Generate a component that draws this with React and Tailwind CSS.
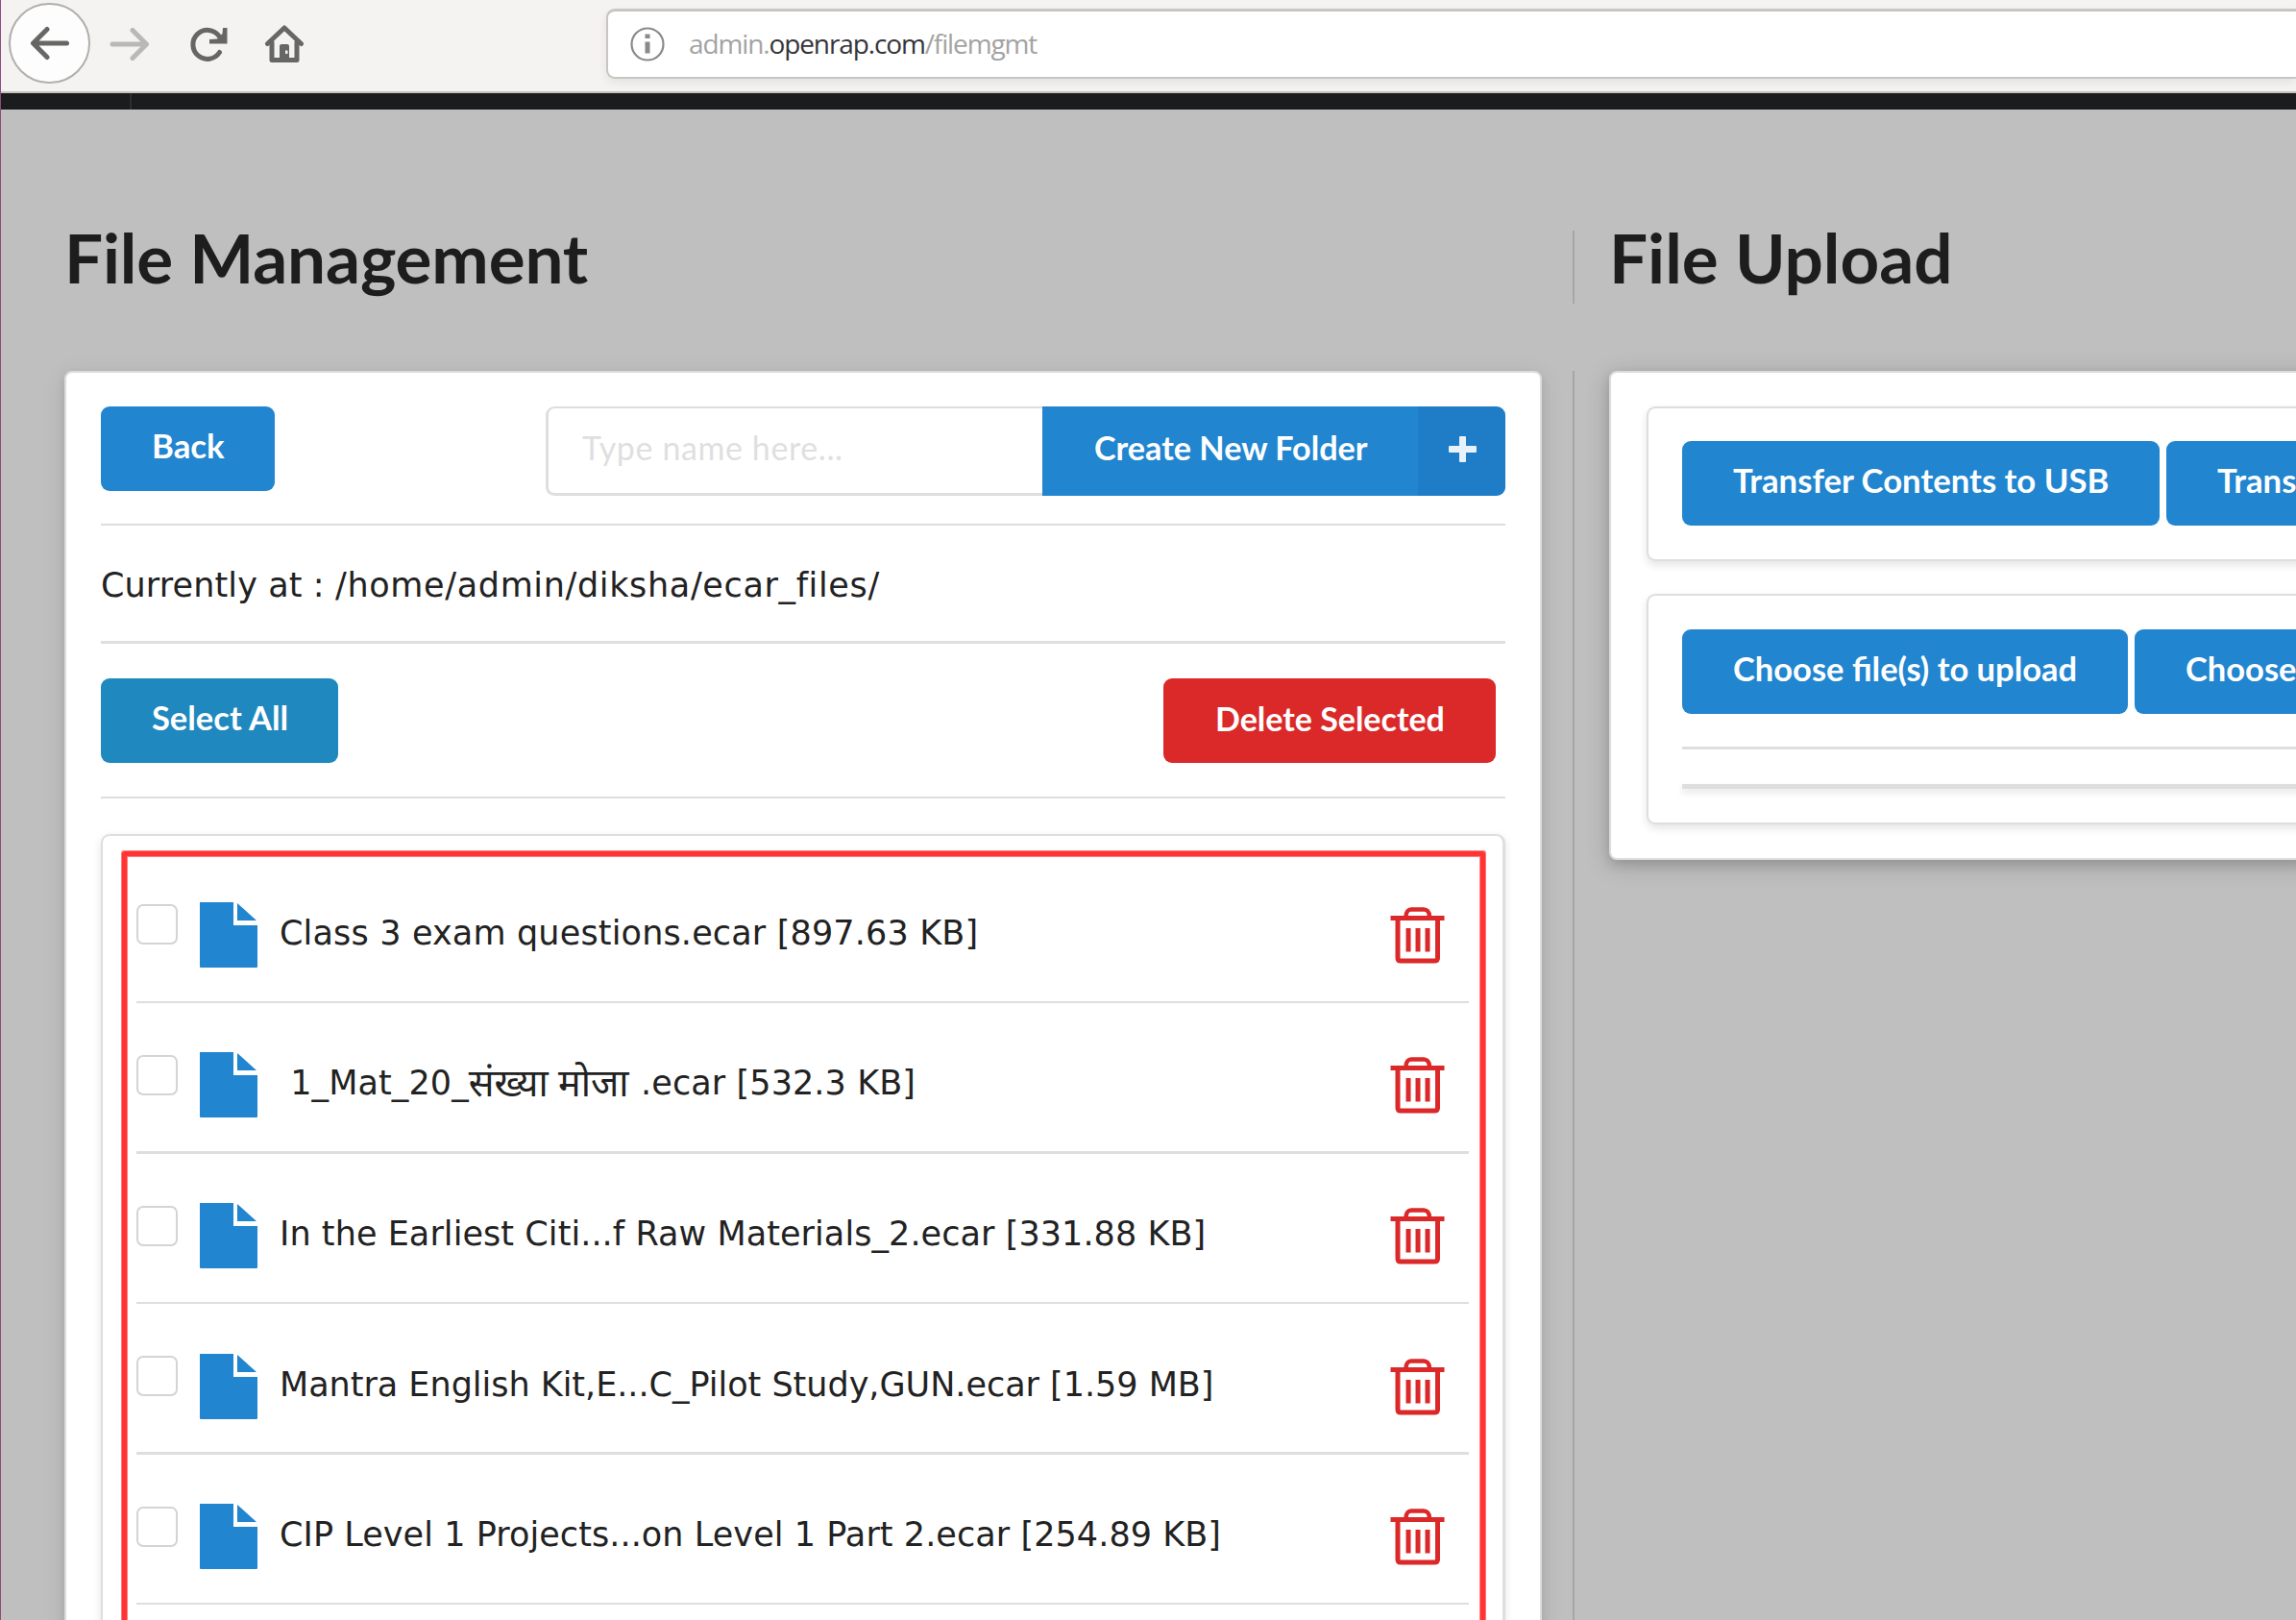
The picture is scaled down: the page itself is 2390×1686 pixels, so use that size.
const lato = "font-['Lato',sans-serif]";
const dejavu = "font-['DejaVu_Sans',sans-serif] text-[#222222]";

const files = [
  {
    name: "Class 3 exam questions.ecar [897.63 KB]",
    row: "h-[157px] border-b-2",
    offset: "mt-[52px]",
    spacing: "tracking-[0.16px]",
  },
  {
    name: (
      <>
        &nbsp;1_Mat_20_
        <span className="inline-block w-[168px] translate-y-[2px] font-['Noto_Sans',sans-serif] text-[39.500px] leading-none tracking-normal">
          संख्या मोजा
        </span>
        {" "}.ecar [532.3 KB]
      </>
    ),
    row: "h-[157px] border-b-3",
    offset: "mt-[51px]",
    spacing: "tracking-[0.1px]",
  },
  {
    name: "In the Earliest Citi...f Raw Materials_2.ecar [331.88 KB]",
    row: "h-[156px] border-b-2",
    offset: "mt-[51px]",
    spacing: "tracking-[0.07px]",
  },
  {
    name: "Mantra English Kit,E...C_Pilot Study,GUN.ecar [1.59 MB]",
    row: "h-[157px] border-b-3",
    offset: "mt-[52px]",
    spacing: "tracking-[-0.02px]",
  },
  {
    name: "CIP Level 1 Projects...on Level 1 Part 2.ecar [254.89 KB]",
    row: "h-[156px] border-b-2",
    offset: "mt-[51px]",
    spacing: "tracking-[0.07px]",
  },
];

function FileIcon() {
  return (
    <svg width="62" height="69" viewBox="0 0 62 69" fill="#2185d0" className="block">
      <path d="M1 0H36V24H61V67Q61 68 60 68H2Q1 68 1 67Z" />
      <path d="M40 1L60 19H40Z" />
    </svg>
  );
}

function TrashIcon() {
  return (
    <svg width="57" height="59" viewBox="0 0 57 59" fill="none" stroke="#db2828" strokeWidth="5" className="block">
      <path d="M0.5 11.5H56.5" />
      <path d="M16.5 10C16.500 5 19 2.500 22 2.500H35C38 2.500 41 5 41 10" strokeWidth="4.500" />
      <path d="M8 12V53Q8 56 11 56H46Q49.500 56 49.500 53V12" />
      <path d="M19 22V46.500M29 22V46.500M39 22V46.500" />
    </svg>
  );
}

function Button({ children, className }) {
  return (
    <button
      className={`${lato} flex h-[88px] shrink-0 items-center justify-start whitespace-nowrap rounded-[9px] pb-[6px] pl-[53px] font-bold text-white ${className}`}
    >
      {children}
    </button>
  );
}

function BrowserBar() {
  return (
    <header className="flex h-[97px] shrink-0 items-start border-b-2 border-[#c6c2be] bg-[#f4f3f1]">
      <div className="ml-2 mt-[3px] flex h-[84px] w-[85px] items-center justify-center rounded-full border-2 border-[#b0afad] bg-[#fdfdfd]">
        <svg width="42" height="36" viewBox="0 0 42 36" fill="none" stroke="#666664" strokeWidth="5" strokeLinecap="round" strokeLinejoin="round">
          <path d="M38.500 18H4M18 3.500L3.500 18L18 32.500" />
        </svg>
      </div>
      <svg className="ml-[20px] mt-[28px]" width="42" height="36" viewBox="0 0 42 36" fill="none" stroke="#b9b8b6" strokeWidth="5" strokeLinecap="round" strokeLinejoin="round">
        <path d="M3 18H38M24 3.500L38.500 18L24 32.500" />
      </svg>
      <svg className="ml-[41px] mt-[28px]" width="40" height="37" viewBox="0 0 40 37" fill="none" stroke="#666664" strokeWidth="5">
        <path d="M31.500 26.500A15 15 0 1 1 31 9.500" strokeLinecap="round" />
        <path d="M35 1L39.500 1V17.500H21V13L29 12.500L34.500 7Z" fill="#666664" stroke="none" />
      </svg>
      <svg className="ml-[38px] mt-[25px]" width="42" height="41" viewBox="0 0 42 41" fill="none" stroke="#666664" strokeWidth="5" strokeLinejoin="round" strokeLinecap="round">
        <path d="M3.500 20.500L21 4L38.500 20.500" />
        <path d="M8 19V37.500H34V19" />
        <path d="M16 38V23Q16 21 18 21H24Q26 21 26 23V38Z" fill="#666664" stroke="none" />
        <rect x="22" y="27.500" width="2.500" height="3.500" fill="#f4f3f1" stroke="none" />
      </svg>
      <div className="ml-[314px] mt-[9px] flex h-[73px] flex-1 items-center rounded-l-[9px] border-b-2 border-l-2 border-t-3 border-[#c8c5c2] bg-white shadow-[0_4px_10px_rgba(0,0,0,0.07)]">
        <svg className="ml-[23px]" width="36" height="36" viewBox="0 0 36 36" fill="none">
          <circle cx="18" cy="18" r="16.500" stroke="#8a8a8a" strokeWidth="2.200" />
          <path d="M15.500 15.500H20.500V27.500H15.500ZM15.500 7.500H20.500V12H15.500Z" fill="#8a8a8a" />
        </svg>
        <span className="-mt-[3px] ml-[25px] whitespace-nowrap font-['Open_Sans',sans-serif] text-[28px] leading-10 tracking-[-1.12px] text-[#a3a3a3]">
          admin.<span className="text-[#35353a]">openrap.com</span>/filemgmt
        </span>
      </div>
    </header>
  );
}

function FileManagement() {
  return (
    <section className="h-[1400px] w-[1538px] shrink-0 rounded-[8px] border-2 border-[#dcdcdc] bg-white px-9 pt-[35px] shadow-[0_5px_10px_rgba(34,36,38,0.1),0_5px_24px_rgba(34,36,38,0.1)]">
      <div className="flex h-[124px] items-start justify-between border-b-2 border-[#dedede]">
        <Button className="w-[181px] bg-[#2185d0] text-[34.800px]">Back</Button>
        <div className="flex h-[93px] w-[999px]">
          <div className={`${lato} flex w-[517px] items-center rounded-l-[9px] border-b-3 border-l-3 border-t-2 border-[#dedede] pb-[7px] pl-[35px] text-[34px] tracking-[0.6px] text-[#dfdfe0]`}>
            Type name here...
          </div>
          <button className={`${lato} flex w-[391px] items-center bg-[#2185d0] pb-[7px] pl-[54px] text-[34.200px] font-bold text-white`}>
            Create New Folder
          </button>
          <div className="flex w-[91px] items-center justify-center rounded-r-[9px] bg-[#1e7dc6]">
            <svg width="30" height="28" viewBox="0 0 30 28" fill="#e8f2fa" className="mb-[3px] mr-[-3px]">
              <path d="M11 1Q11 0 12 0H17Q18 0 18 1V10H28Q29 10 29 11V16Q29 17 28 17H18V26Q18 27 17 27H12Q11 27 11 26V17H1Q0 17 0 16V11Q0 10 1 10H11Z" />
            </svg>
          </div>
        </div>
      </div>
      <div className={`${dejavu} flex h-[123px] items-center whitespace-pre border-b-3 border-[#dedede] pt-[4px] text-[35px]`}>
        <span className="tracking-[0.12px]">{"Currently at : "}</span>
        <span className="tracking-[0.64px]">/home/admin/diksha/ecar_files/</span>
      </div>
      <div className="flex h-[161px] items-start justify-between border-b-2 border-[#dedede] pr-[10px] pt-9">
        <Button className="w-[247px] bg-[#1f88be] text-[34.500px]">Select All</Button>
        <Button className="w-[346px] bg-[#db2828] pl-[54px] text-[34px]">Delete Selected</Button>
      </div>
      <div className="relative mt-[37px] h-[900px] rounded-[9px] border-2 border-r-3 border-[#dedede] pl-[35px] pr-[35px] pt-[17px] shadow-[0_3px_8px_rgba(34,36,38,0.12)]">
        {files.map((f, i) => (
          <div key={i} className={`flex items-start border-[#dedede] ${f.row}`}>
            <div className="mt-[54px] h-[42px] w-[43px] rounded-[7px] border-2 border-[#d4d4d5] bg-white" />
            <div className={`ml-[22px] flex flex-1 items-start ${f.offset}`}>
              <FileIcon />
              <div className={`${dejavu} ml-[22px] mt-[8px] h-12 flex-1 whitespace-nowrap text-[35px] leading-[48px] ${f.spacing}`}>
                {f.name}
              </div>
              <div className="mr-[25px] mt-[5px]">
                <TrashIcon />
              </div>
            </div>
          </div>
        ))}
        <div className="absolute left-[20px] top-[16px] h-[900px] w-[1419px] rounded-[2px] border-[5px] border-[#ff3535] shadow-[0_0_0_1px_#ff7a7a,inset_0_0_0_1px_#ff7a7a]" />
      </div>
    </section>
  );
}

const inner =
  "rounded-l-[9px] border-y-2 border-l-2 border-[#dedede] pl-[35px] shadow-[0_4px_8px_rgba(34,36,38,0.12)]";

function FileUpload() {
  return (
    <section className="ml-9 h-[509px] w-[740px] shrink-0 rounded-[8px] border-2 border-[#dcdcdc] bg-white pl-[37px] pt-[35px] shadow-[0_5px_12px_rgba(34,36,38,0.15),0_5px_26px_rgba(34,36,38,0.2)]">
      <div className={`${inner} flex h-[161px] gap-[7px] pt-[34px]`}>
        <Button className="w-[497px] bg-[#2185d0] text-[34.700px]">Transfer Contents to USB</Button>
        <Button className="w-[520px] bg-[#2185d0] text-[34.700px]">Trans</Button>
      </div>
      <div className={`${inner} mt-[34px] h-[240px] pt-[35px]`}>
        <div className="flex gap-[7px]">
          <Button className="w-[464px] bg-[#2185d0] text-[34.500px]">Choose file(s) to upload</Button>
          <Button className="w-[520px] bg-[#2185d0] text-[34.500px]">Choose</Button>
        </div>
        <div className="mt-[34px] h-[3px] bg-[#dedede]" />
        <div className="mt-[36px] h-[5px] bg-[#dedede] shadow-[0_4px_6px_rgba(34,36,38,0.12)]" />
      </div>
    </section>
  );
}

export default function App() {
  return (
    <div className="flex h-[1686px] w-[2390px] flex-col overflow-hidden border-l border-[#8f4b80] bg-[#bfbfbf]">
      <BrowserBar />
      <div className="flex h-[17px] shrink-0 bg-[#1b1c1d]">
        <div className="w-[136px] border-r-2 border-[#2d2e2f]" />
      </div>
      <main className="pl-[66px] pt-[126px]">
        <div className={`${lato} flex h-[76px] text-[71px] font-bold leading-[76px] text-[#1d1d1d]`}>
          <h1 className="-mt-[10px] w-[1570px] shrink-0 tracking-[-0.15px]">File Management</h1>
          <div className="w-[2px] shrink-0 bg-[#a6a6a6]" />
          <h1 className="-mt-[10px] ml-9 shrink-0">File Upload</h1>
        </div>
        <div className="mt-[70px] flex items-start">
          <FileManagement />
          <div className="ml-8 h-[1400px] w-[2px] shrink-0 bg-[#a6a6a6]" />
          <FileUpload />
        </div>
      </main>
    </div>
  );
}
